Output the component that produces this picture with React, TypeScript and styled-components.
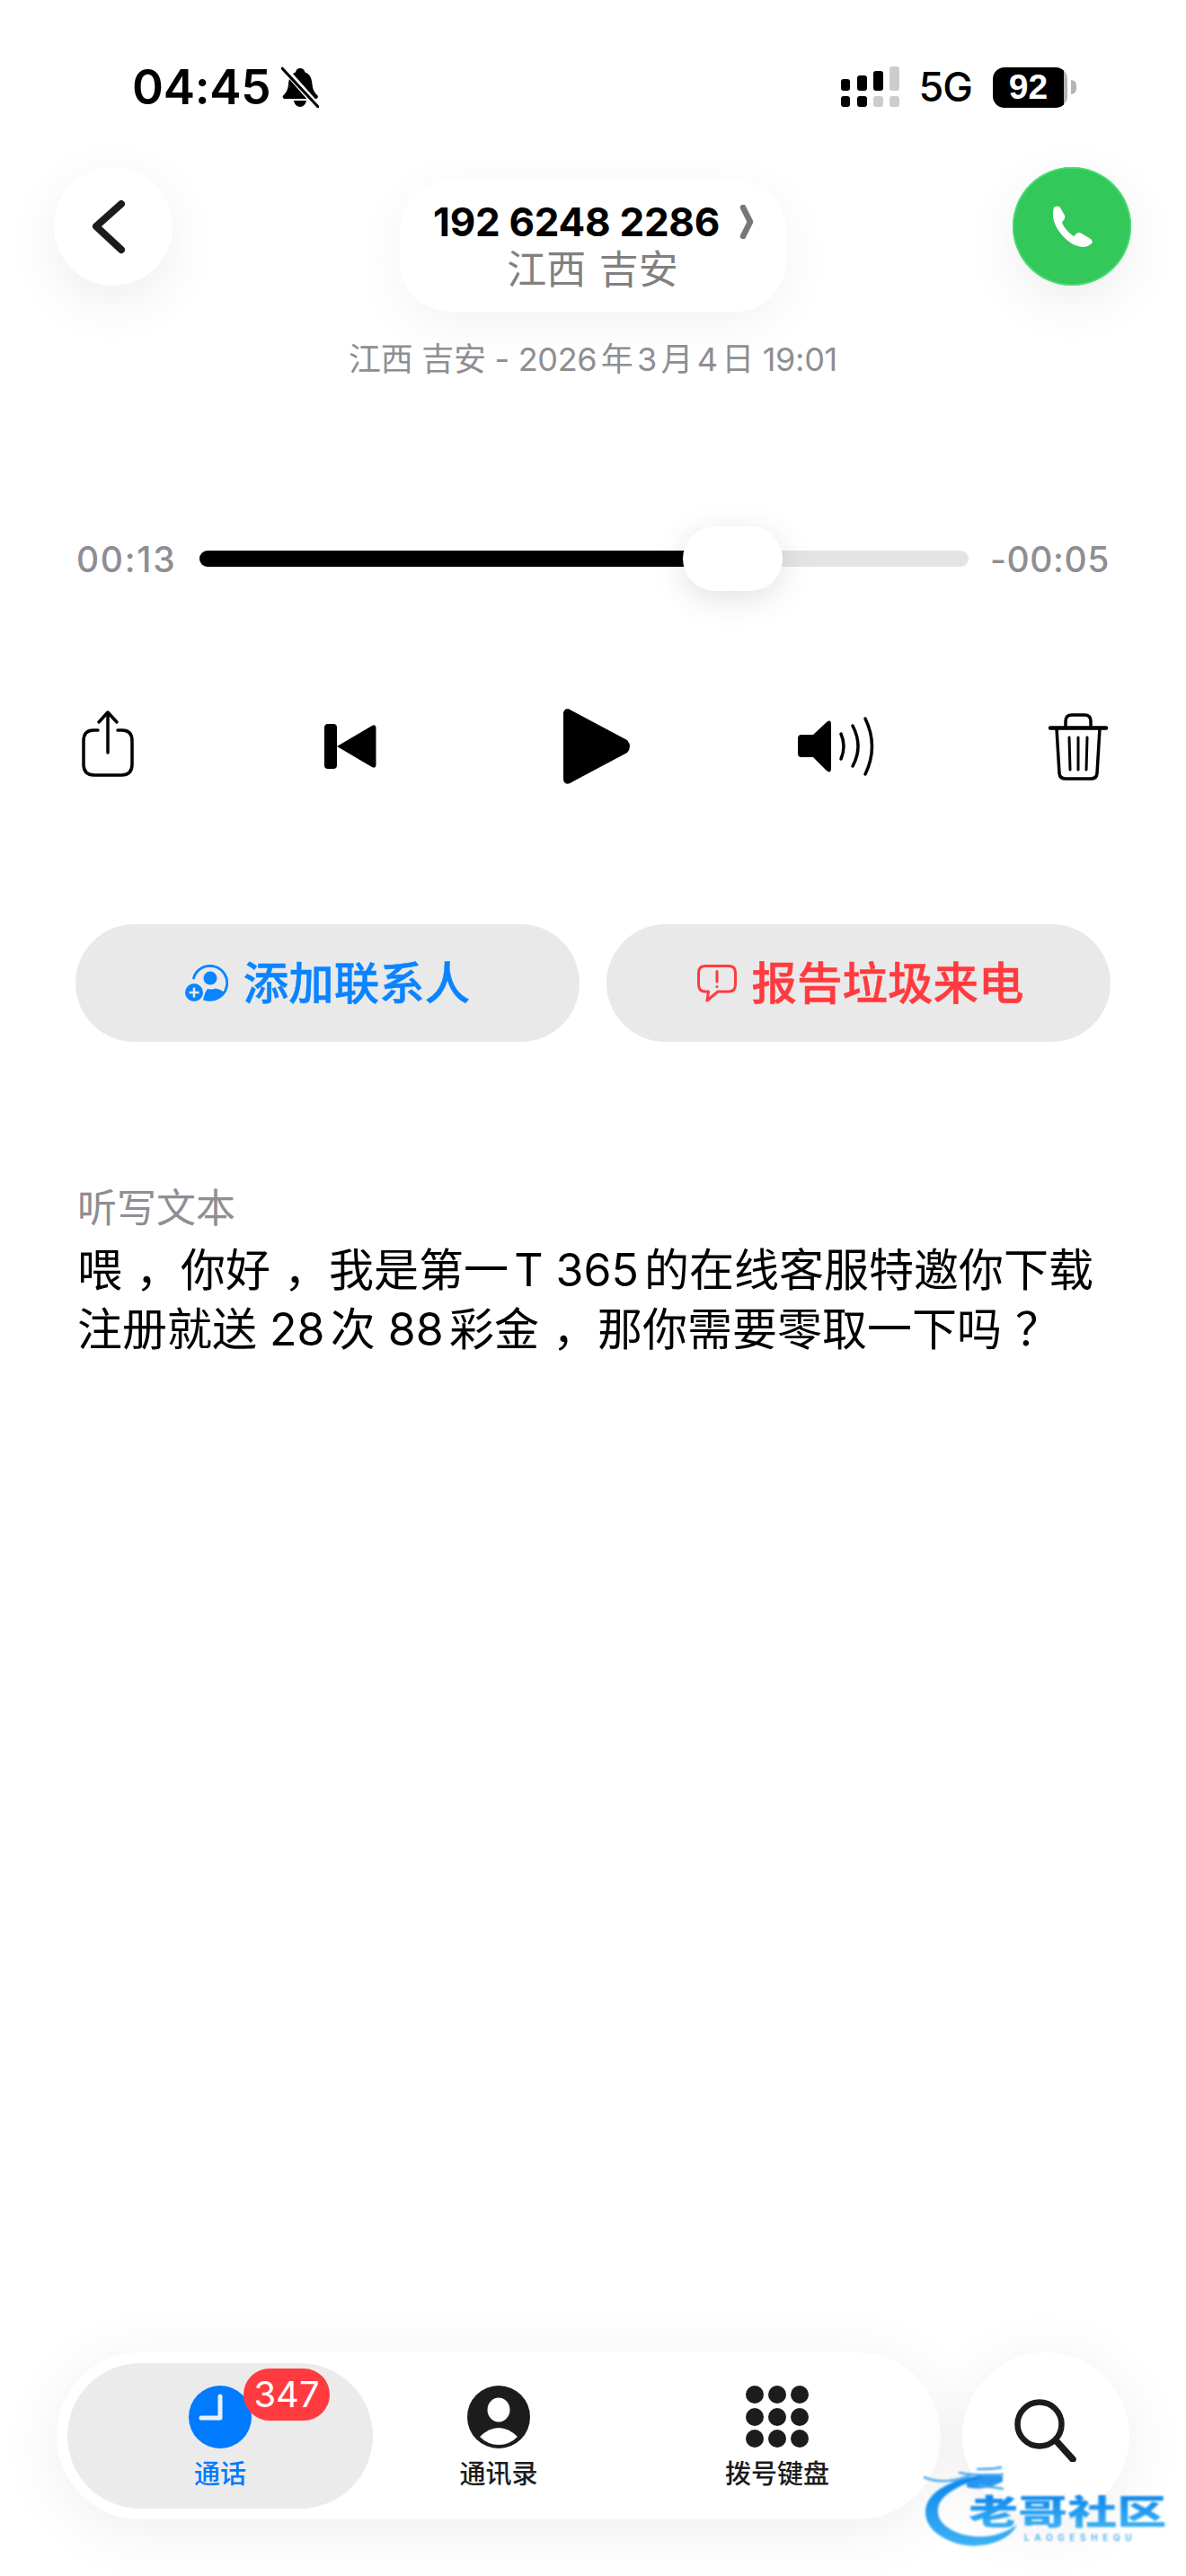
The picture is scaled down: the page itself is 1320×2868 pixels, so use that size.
import React from "react";
import styled, { createGlobalStyle } from "styled-components";

const Global = createGlobalStyle`
  html, body { margin: 0; padding: 0; background: #fff; }
  body { font-family: Inter, "Noto Sans CJK SC", sans-serif; color: #000; text-autospace: normal; text-spacing-trim: space-all; }
  * { box-sizing: border-box; }
`;

const Page = styled.div`
  position: relative; width: 1320px; height: 2868px; background: #fff; overflow: hidden;
  display: flex; flex-direction: column;
`;

const StatusBar = styled.div`
  display: flex; justify-content: space-between; align-items: center;
  height: 46px; margin-top: 74px; padding: 0 122px 0 147px;
`;
const StatusLeft = styled.div`display: flex; align-items: center; gap: 12px;`;
const Time = styled.span`font-size: 53px; font-weight: 600; line-height: 46px; letter-spacing: -0.3px;`;
const StatusRight = styled.div`display: flex; align-items: center;`;
const Net = styled.span`font-size: 45px; font-weight: 500; line-height: 46px; margin: 0 23px 0 22px; letter-spacing: -1px;`;
const Battery = styled.div`
  width: 83px; height: 45px; border-radius: 13px; color: #fff; font-size: 39px; font-weight: 700;
  display: flex; align-items: center; justify-content: center; padding-right: 4px;
  background: linear-gradient(90deg, #000 0, #000 79px, #b4b4b4 79px);
  font-family: "Liberation Sans", sans-serif;
`;
const Nub = styled.div`
  width: 6px; height: 16px; margin-left: 4px; background: #b4b4b4; border-radius: 0 8px 8px 0;
`;

const Header = styled.div`
  display: flex; justify-content: space-between; align-items: flex-start;
  margin-top: 66px; padding: 0 61px 0 60px; height: 132px;
`;
const RoundButton = styled.div<{ $green?: boolean }>`
  width: 132px; height: 132px; border-radius: 50%;
  display: flex; align-items: center; justify-content: center;
  background: ${(p) => (p.$green ? "#34c759" : "#fff")};
  box-shadow: 0 18px 60px rgba(0, 0, 0, 0.07) ${(p) => (p.$green ? ", inset 0 0 0 1.5px #4be07a" : "")};
`;
const NumberPill = styled.div`
  width: 430px; height: 146px; margin-top: 15px; border-radius: 56px; background: #fff; flex: none;
  box-shadow: 0 14px 56px rgba(0, 0, 0, 0.05);
  display: flex; flex-direction: column; align-items: center; justify-content: center;
`;
const NumberRow = styled.div`
  display: flex; align-items: center; gap: 22px; font-size: 44px; font-weight: 700; line-height: 52px; margin-left: 2px; letter-spacing: -0.3px;
`;
const Region = styled.div`font-size: 44px; line-height: 54px; color: #808080; word-spacing: 2px;`;
const DateLine = styled.div`
  margin-top: 59px; text-align: center; font-size: 36px; line-height: 46px; color: #8e8e93; letter-spacing: -0.3px;
`;

const SliderRow = styled.div`
  display: flex; align-items: center; margin-top: 163px; height: 72px; padding: 0 85px;
`;
const TimeText = styled.span`
  font-size: 39px; font-weight: 500; color: #8e8e93; flex: none; width: 137px; letter-spacing: 1.7px;
`;
const TimeRight = styled(TimeText)`width: 157px; text-align: right; letter-spacing: 0.6px;`;
const Track = styled.div`
  position: relative; flex: 1; height: 18px; border-radius: 9px; background: #e4e4e4;
`;
const Fill = styled.div`height: 100%; border-radius: 9px; background: #000;`;
const Thumb = styled.div`
  position: absolute; top: -27px; width: 111px; height: 72px; border-radius: 36px; background: #fff;
  box-shadow: 0 8px 36px rgba(0, 0, 0, 0.12);
`;

const Controls = styled.div`
  display: flex; justify-content: space-between; margin-top: 131px; padding: 0 60px;
`;
const ControlIcon = styled.svg`width: 120px; height: 84px; flex: none; display: block;`;

const Actions = styled.div`
  display: grid; grid-template-columns: 561px 561px; gap: 30px; margin-top: 156px; padding: 0 84px;
`;
const ActionButton = styled.div<{ $color: string; $nudge?: number }>`
  height: 131px; border-radius: 66px; background: #e9e9e9; color: ${(p) => p.$color};
  display: flex; align-items: center; justify-content: center; gap: 17px;
  padding-left: ${(p) => p.$nudge ?? 0}px;
  font-size: 50.5px; font-weight: 500; line-height: 60px; -webkit-text-stroke: 0.5px ${(p) => p.$color};
`;

const Transcript = styled.div`margin-top: 157px; padding: 0 86px;`;
const TranscriptLabel = styled.div`font-size: 44px; line-height: 56px; color: #8e8e93;`;
const TranscriptText = styled.div`font-size: 50px; line-height: 66px; color: #000; margin-top: 8px; white-space: nowrap;`;
const Punct = styled.span`margin-left: 15px;`;

const TabRow = styled.div`
  margin-top: auto; display: flex; gap: 24px; padding: 0 63px 63px;
`;
const TabBar = styled.div`
  width: 984px; height: 186px; border-radius: 93px; background: #fff; padding: 12px;
  display: grid; grid-template-columns: 340px 280px 1fr;
  box-shadow: 0 10px 70px rgba(0, 0, 0, 0.07);
`;
const Tab = styled.div<{ $active?: boolean }>`
  position: relative; height: 162px; border-radius: 81px; padding-top: 25px;
  display: flex; flex-direction: column; align-items: center;
  background: ${(p) => (p.$active ? "#ebebeb" : "transparent")};
  color: ${(p) => (p.$active ? "#007aff" : "#1c1c1c")};
`;
const TabIcon = styled.svg`width: 72px; height: 70px; display: block; flex: none;`;
const TabLabel = styled.div`font-size: 29px; font-weight: 500; line-height: 40px; margin-top: 9px;`;
const Badge = styled.div`
  position: absolute; left: 196px; top: 6px; width: 96px; height: 58px; border-radius: 29px;
  background: #ff3b3f; color: #fff; font-size: 40px; line-height: 58px; text-align: center; font-weight: 400;
`;
const SearchButton = styled.div`
  width: 186px; height: 186px; border-radius: 50%; background: #fff;
  display: flex; align-items: center; justify-content: center; flex: none;
  box-shadow: 0 10px 70px rgba(0, 0, 0, 0.07);
`;
const SearchIcon = styled.svg`width: 70px; height: 70px; margin-top: -12px;`;

const Watermark = styled.div`
  position: absolute; left: 1028px; top: 2745px; width: 272px; height: 95px; filter: blur(0.9px);
`;
const WaterDragon = styled.svg`position: absolute; inset: 0; width: 272px; height: 95px;`;
const WaterTitle = styled.div`
  position: absolute; left: 50px; top: 30px; width: 153px; font-size: 38px; font-weight: 900; line-height: 42px;
  white-space: nowrap; transform: scaleX(1.45); transform-origin: left top;
  background: linear-gradient(180deg, #0a84ee, #3fb4f2); -webkit-background-clip: text; background-clip: text; color: transparent;
`;
const WaterSub = styled.div`
  position: absolute; left: 112px; top: 74px; font-size: 10px; font-weight: 700; letter-spacing: 5.6px; line-height: 12px;
  color: #63b8ee; white-space: nowrap;
`;

export default function App() {
  return (
    <Page>
      <Global />
      <StatusBar>
        <StatusLeft>
          <Time>04:45</Time>
          <svg width="42" height="46" viewBox="0 0 42 46">
            <path d="M21 2c3 0 5 2 5.500 4.500C32 8.500 34 13 34.500 20c.4 5 2 9 6 12.500 1 1.500 0 3.500-2 3.500H4c-2 0-3-2-2-3.500C6 29 7.500 25 8 20c.5-7 2.500-11.500 8-13.500C16.500 4 18 2 21 2z" />
            <path d="M14 38h14c-.6 4-3.500 7-7 7s-6.400-3-7-7z" />
            <path d="M2 1 L41 45" stroke="#fff" strokeWidth="7" />
            <path d="M1 2 L41 45" stroke="#000" strokeWidth="3" strokeLinecap="round" />
          </svg>
        </StatusLeft>
        <StatusRight>
          <svg width="65" height="46" viewBox="0 0 65 46">
            <rect x="0" y="14" width="10" height="13" rx="3" />
            <rect x="18" y="10" width="11" height="17" rx="3" />
            <rect x="36" y="5" width="11" height="22" rx="3" />
            <rect x="54" y="0" width="11" height="27" rx="3" fill="#ccc" />
            <rect x="0" y="33" width="10" height="12" rx="3" />
            <rect x="18" y="33" width="11" height="12" rx="3" />
            <rect x="36" y="33" width="11" height="12" rx="3" fill="#ccc" />
            <rect x="54" y="33" width="11" height="12" rx="3" fill="#ccc" />
          </svg>
          <Net>5G</Net>
          <Battery>92</Battery>
          <Nub />
        </StatusRight>
      </StatusBar>

      <Header>
        <RoundButton>
          <svg width="132" height="132" viewBox="0 0 132 132">
            <path d="M75 41 L47 66 L75 92" fill="none" stroke="#1c1c1e" strokeWidth="8" strokeLinecap="round" strokeLinejoin="round" />
          </svg>
        </RoundButton>
        <NumberPill>
          <NumberRow>
            192 6248 2286
            <svg width="16" height="38" viewBox="0 0 16 38">
              <path d="M4 3 L12 19 L4 35" fill="none" stroke="#777" strokeWidth="6.500" strokeLinecap="round" strokeLinejoin="round" />
            </svg>
          </NumberRow>
          <Region>江西 吉安</Region>
        </NumberPill>
        <RoundButton $green>
          <svg width="48" height="48" viewBox="0 0 48 48" fill="#fff">
            <path d="M4 3 Q8 0 11 3 L16 12 Q17 15 14 18 L13 20 Q16 28 26 35 L29 32 Q32 30 35 32 L45 38 Q48 41 46 43 Q42 47 36 47 Q22 46 10 30 Q0 16 4 3 Z" />
          </svg>
        </RoundButton>
      </Header>

      <DateLine>江西 吉安 - 2026年3月4日 19:01</DateLine>

      <SliderRow>
        <TimeText>00:13</TimeText>
        <Track>
          <Fill style={{ width: "66%" }} />
          <Thumb style={{ left: "62.85%" }} />
        </Track>
        <TimeRight>-00:05</TimeRight>
      </SliderRow>

      <Controls>
        <ControlIcon viewBox="0 0 120 84" fill="none" stroke="#000" strokeWidth="3.500" strokeLinecap="round" strokeLinejoin="round">
          <path d="M49 24 H44 Q33 24 33 36 V62 Q33 74 45 74 H75 Q87 74 87 62 V36 Q87 24 76 24 H71" />
          <path d="M60 49 V5 M50 15 L60 4 L70 15" />
        </ControlIcon>
        <ControlIcon viewBox="0 0 120 84">
          <rect x="31" y="17" width="14" height="50" rx="4" />
          <path d="M45 42 L84 19 Q88 17 88.500 21 V63 Q88 67 84 65 Z" />
        </ControlIcon>
        <ControlIcon viewBox="0 0 120 84">
          <path d="M27 6 C27 0 32 -1 36 2 L98 35 Q104 42 98 49 L36 82 C32 85 27 84 27 78 Z" />
        </ControlIcon>
        <ControlIcon viewBox="0 0 120 84">
          <path d="M18 33 Q18 29 22 29 H35 L50 15 Q55 11 55 18 V66 Q55 73 50 69 L35 54 H22 Q18 54 18 50 Z" />
          <path d="M66 28 Q72 42 66 56 M79 19 Q91 42 79 64 M93 11 Q108 42 93 73" fill="none" stroke="#000" strokeWidth="3.500" strokeLinecap="round" />
        </ControlIcon>
        <ControlIcon viewBox="0 0 120 84" fill="none" stroke="#000" strokeWidth="3.500" strokeLinecap="round" strokeLinejoin="round">
          <path d="M29 21.500 H91" strokeWidth="4.500" />
          <path d="M46 21 V14 Q46 7 53 7 H67 Q74 7 74 14 V21" />
          <path d="M36 22 L39 72 Q39.500 78 46 78 H74 Q80.500 78 81 72 L84 22" />
          <path d="M50 32 L51 68 M60 32 V68 M70 32 L69 68" strokeWidth="3" />
        </ControlIcon>
      </Controls>

      <Actions>
        <ActionButton $color="#0a84ff">
          <svg width="48" height="41" viewBox="0 0 48 41" fill="#0a84ff">
            <path d="M9.500 15 A19 19 0 1 1 24 39" fill="none" stroke="#0a84ff" strokeWidth="2.800" strokeLinecap="round" />
            <circle cx="28" cy="15" r="7.500" />
            <path d="M20 39.500 Q22 30 25 27 Q30 28 34 26.500 Q39 27 42.500 30 Q38 39.500 28 40 Q23 40.500 20 39.500Z" />
            <circle cx="10" cy="31" r="10" />
            <path d="M10 25.500 V36.500 M4.500 31 H15.500" stroke="#e9e9e9" strokeWidth="2.500" />
          </svg>
          添加联系人
        </ActionButton>
        <ActionButton $color="#ff3b3f" $nudge={4}>
          <svg width="44" height="42" viewBox="0 0 44 42" fill="none" stroke="#ff3b3f" strokeWidth="3" strokeLinejoin="round">
            <path d="M9 1.500 H35 Q42.500 1.500 42.500 9 V22 Q42.500 30 35 30 H23 L11 40 L12.500 30 H9 Q1.500 30 1.500 22 V9 Q1.500 1.500 9 1.500Z" />
            <path d="M22 7.500 V19" strokeLinecap="round" />
            <circle cx="22" cy="24.500" r="1.500" fill="#ff3b3f" stroke="none" />
          </svg>
          报告垃圾来电
        </ActionButton>
      </Actions>

      <Transcript>
        <TranscriptLabel>听写文本</TranscriptLabel>
        <TranscriptText>
          喂<Punct>，</Punct>你好<Punct>，</Punct>我是第一T 365的在线客服特邀你下载
          <br />
          注册就送 28次 88彩金<Punct>，</Punct>那你需要零取一下吗<Punct>？</Punct>
        </TranscriptText>
      </Transcript>

      <TabRow>
        <TabBar>
          <Tab $active>
            <TabIcon viewBox="0 0 72 70">
              <circle cx="36" cy="35" r="35" fill="#007aff" />
              <path d="M36 12 V36 H15" fill="none" stroke="#e8f1ff" strokeWidth="5" strokeLinecap="round" strokeLinejoin="round" />
            </TabIcon>
            <TabLabel>通话</TabLabel>
            <Badge>347</Badge>
          </Tab>
          <Tab>
            <TabIcon viewBox="0 0 72 70">
              <circle cx="36" cy="35" r="35" fill="#1c1c1c" />
              <ellipse cx="36" cy="27" rx="12.500" ry="13.500" fill="#fff" />
              <path d="M15 57 Q25 47 36 47 Q47 47 57 57 Q48 66 36 66 Q24 66 15 57Z" fill="#fff" />
            </TabIcon>
            <TabLabel>通讯录</TabLabel>
          </Tab>
          <Tab>
            <TabIcon viewBox="0 0 72 70" fill="#1c1c1c">
              <circle cx="11" cy="10" r="10" /><circle cx="36" cy="10" r="10" /><circle cx="61" cy="10" r="10" />
              <circle cx="11" cy="35" r="10" /><circle cx="36" cy="35" r="10" /><circle cx="61" cy="35" r="10" />
              <circle cx="11" cy="59" r="10" /><circle cx="36" cy="59" r="10" /><circle cx="61" cy="59" r="10" />
            </TabIcon>
            <TabLabel>拨号键盘</TabLabel>
          </Tab>
        </TabBar>
        <SearchButton>
          <SearchIcon viewBox="0 0 70 70" fill="none" stroke="#1c1c1c" strokeWidth="6.500" strokeLinecap="round">
            <circle cx="28" cy="28" r="24.500" />
            <path d="M46 46 L65 67" strokeWidth="7.500" />
          </SearchIcon>
        </SearchButton>
      </TabRow>

      <Watermark>
        <WaterDragon viewBox="0 0 272 95">
          <defs>
            <linearGradient id="wg" x1="0" y1="0" x2="0" y2="1">
              <stop offset="0" stopColor="#0b86ee" />
              <stop offset="1" stopColor="#3cb2f3" />
            </linearGradient>
          </defs>
          <path d="M72 10 C30 14 2 30 2 52 C2 78 40 92 62 89 C84 87 98 78 104 66 C90 76 70 82 50 78 C28 74 14 62 16 48 C18 32 40 22 72 10Z" fill="url(#wg)" />
          <path d="M48 18 C60 8 75 8 88 12 L88 18 L74 24 C64 26 56 26 48 24Z" fill="#0f8bee" opacity="0.9" />
          <path d="M0 13 C16 20 36 18 54 10 M40 8 C56 12 74 10 88 10 M62 22 C72 24 80 24 88 26 M60 4 C70 4 80 4 86 2" fill="none" stroke="#4aa9ef" strokeWidth="2.500" strokeLinecap="round" />
        </WaterDragon>
        <WaterTitle>老哥社区</WaterTitle>
        <WaterSub>LAOGESHEQU</WaterSub>
      </Watermark>
    </Page>
  );
}
